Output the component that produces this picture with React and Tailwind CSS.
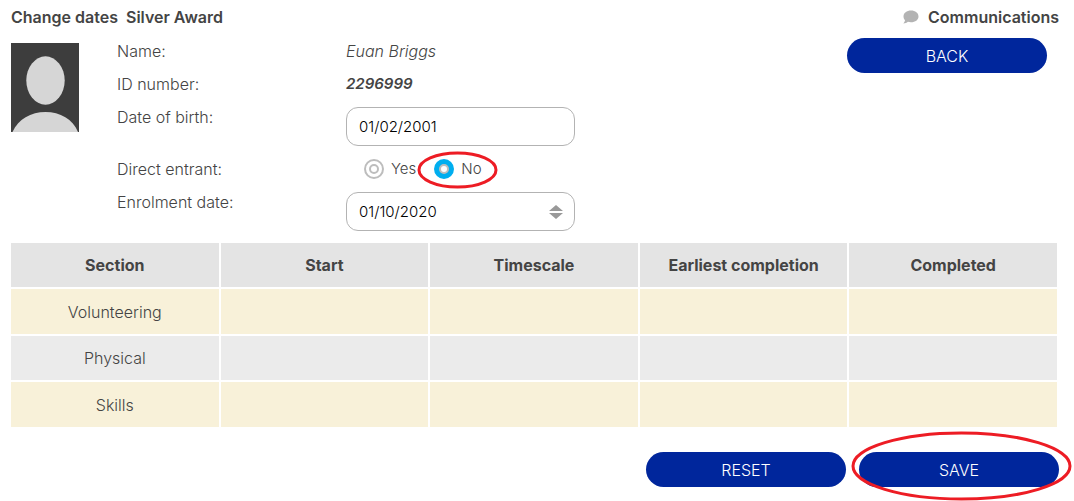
import { useState } from "react";

const COLUMNS = ["Section", "Start", "Timescale", "Earliest completion", "Completed"];
const SECTIONS = ["Volunteering", "Physical", "Skills"];

function PillButton({ children, className = "" }) {
  return (
    <button
      type="button"
      className={`h-[35px] w-[200px] shrink-0 rounded-full bg-[#00269c] text-base text-white ${className}`}
    >
      {children}
    </button>
  );
}

function Ring({ className }) {
  return (
    <svg
      className={`pointer-events-none absolute overflow-visible ${className}`}
      viewBox="0 0 100 100"
      preserveAspectRatio="none"
      fill="none"
      stroke="#ed1c24"
      strokeWidth="3"
      aria-hidden="true"
    >
      <ellipse cx="50" cy="50" rx="50" ry="50" vectorEffect="non-scaling-stroke" />
    </svg>
  );
}

function Avatar() {
  return (
    <svg className="mt-[5px] h-[89px] w-[68px] shrink-0" viewBox="0 0 68 89" role="img" aria-label="Participant">
      <rect width="68" height="89" fill="#3d3d3d" />
      <ellipse cx="34.5" cy="37.5" rx="19.2" ry="24.2" fill="#d6d6d6" />
      <path d="M1.5 89C7 76 20 69 34.5 69S62 76 67 89Z" fill="#d6d6d6" />
    </svg>
  );
}

function EntrantOption({ label, value, selected, onSelect, children }) {
  return (
    <label className="relative flex items-center gap-[7px] text-[15px] leading-5">
      <input
        type="radio"
        name="direct-entrant"
        checked={selected === value}
        onChange={() => onSelect(value)}
        className="grid size-5 shrink-0 appearance-none place-items-center rounded-full border-2 border-[#bdbdbd] bg-white before:size-[10px] before:rounded-full before:border-2 before:border-[#bdbdbd] before:bg-white before:content-[''] checked:border-[#00aeef] checked:bg-[#00aeef]"
      />
      {label}
      {children}
    </label>
  );
}

const fieldClass =
  "h-[39px] w-full rounded-xl border border-[#b3b3b3] bg-white px-3 text-[15px] font-light text-black outline-none";

export default function App() {
  const [entrant, setEntrant] = useState("no");
  const [birth, setBirth] = useState("01/02/2001");
  const [enrolment, setEnrolment] = useState("01/10/2020");

  return (
    <main className="bg-white pt-[7px] pr-[15px] pb-[14px] pl-[11px] font-['Inter','Open_Sans',sans-serif] text-base leading-5 font-light text-[#444]">
      <header className="flex items-center justify-between font-semibold">
        <h1 className="flex gap-2">
          <span>Change dates</span>
          <span>Silver Award</span>
        </h1>
        <a href="#communications" className="flex items-center gap-[9px]">
          <svg className="h-[14px] w-4" viewBox="0 0 16 14" fill="#b3b3b3" aria-hidden="true">
            <path d="M8 0.5C12.3 .5 15.5 3 15.5 6.4S12.3 12.2 8 12.2C6.9 12.2 5.8 12 4.9 11.7C3.8 12.7 2.2 13.4.4 13.4C1.4 12.4 2 11.2 2 10.1C1 9.1.5 7.8.5 6.4C.5 3 3.7.5 8 .5Z" />
          </svg>
          Communications
        </a>
      </header>

      <div className="mt-[11px] flex items-start">
        <Avatar />
        <form className="mt-[3px] ml-[38px] grid grid-cols-[229px_229px] items-start gap-y-[13px]">
          <span>Name:</span>
          <span className="italic">Euan Briggs</span>
          <span>ID number:</span>
          <span className="text-[15px] leading-5 font-semibold italic">2296999</span>
          <label htmlFor="birth">Date of birth:</label>
          <input id="birth" type="text" value={birth} onChange={(e) => setBirth(e.target.value)} className={fieldClass} />
          <span id="entrant-label">Direct entrant:</span>
          <div role="radiogroup" aria-labelledby="entrant-label" className="flex gap-[18px] pl-[18px]">
            <EntrantOption label="Yes" value="yes" selected={entrant} onSelect={setEntrant} />
            <EntrantOption label="No" value="no" selected={entrant} onSelect={setEntrant}>
              <Ring className="-top-[6px] -left-[15px] h-[34px] w-[77px]" />
            </EntrantOption>
          </div>
          <label htmlFor="enrolment">Enrolment date:</label>
          <div className="relative">
            <input
              id="enrolment"
              type="text"
              value={enrolment}
              onChange={(e) => setEnrolment(e.target.value)}
              className={fieldClass}
            />
            <button type="button" aria-label="Change enrolment date" className="absolute inset-y-0 right-3">
              <svg className="h-[14px] w-[14px]" viewBox="0 0 14 14" fill="#999" aria-hidden="true">
                <path d="M7 0 14 6H0ZM0 8H14L7 14Z" />
              </svg>
            </button>
          </div>
        </form>
        <PillButton className="mr-3 ml-auto">BACK</PillButton>
      </div>

      <table className="mt-3 w-full table-fixed border-separate border-spacing-0 text-center">
        <thead>
          <tr className="h-[46px] bg-[#e4e4e4]">
            {COLUMNS.map((name) => (
              <th key={name} scope="col" className="border-r-2 border-b-2 border-white font-bold">
                {name}
              </th>
            ))}
          </tr>
        </thead>
        <tbody>
          {SECTIONS.map((name) => (
            <tr key={name} className="h-[46px] bg-[#ebebeb] odd:h-[47px] odd:bg-[#f8f1d9]">
              <th scope="row" className="border-r-2 border-b-2 border-white font-light">
                {name}
              </th>
              {COLUMNS.slice(1).map((column) => (
                <td key={column} className="border-r-2 border-b-2 border-white" />
              ))}
            </tr>
          ))}
        </tbody>
      </table>

      <div className="mt-[23px] flex justify-end gap-[13px]">
        <PillButton>RESET</PillButton>
        <div className="relative">
          <PillButton>SAVE</PillButton>
          <Ring className="-top-[19px] -left-[6px] h-[66px] w-[217px]" />
        </div>
      </div>
    </main>
  );
}
